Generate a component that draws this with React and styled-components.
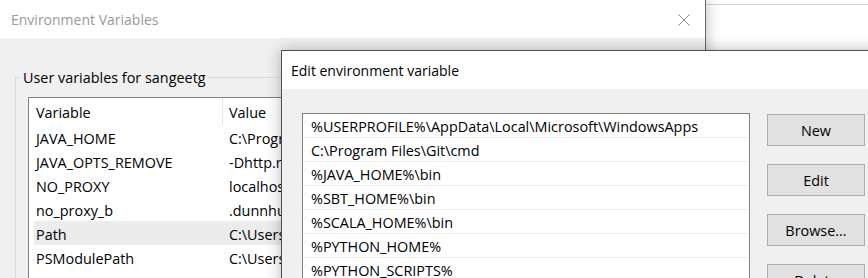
import React from 'react';
import styled, { createGlobalStyle } from 'styled-components';

const GlobalStyle = createGlobalStyle`
  html, body {
    margin: 0;
    padding: 0;
    background: #ffffff;
  }
  body {
    font-family: "Open Sans", "Noto Sans", sans-serif;
    font-size: 14.4px;
    color: #000000;
  }
`;

const Desktop = styled.div`
  position: relative;
  width: 868px;
  height: 278px;
  overflow: hidden;
  background: #ffffff;
`;

const Window = styled.div`
  position: absolute;
  left: ${p => p.$left}px;
  top: ${p => p.$top}px;
  width: ${p => p.$width}px;
  height: ${p => p.$height}px;
  display: flex;
  flex-direction: column;
  background: #f0f0f0;
  border: 1px solid ${p => p.$border || '#5c5c5c'};
  box-shadow: 0 0 14px rgba(0, 0, 0, 0.28);
  z-index: ${p => p.$z};
`;

const OtherWindow = styled.div`
  position: absolute;
  left: 700px;
  top: 4px;
  width: 200px;
  height: 300px;
  background: #ffffff;
  border-top: 1px solid #d4d4da;
  z-index: 0;
`;

const TitleBar = styled.div`
  flex: 0 0 ${p => p.$height}px;
  display: flex;
  align-items: center;
  justify-content: space-between;
  background: #ffffff;
  padding: 1px ${p => p.$padRight}px 0 ${p => p.$padLeft}px;
  color: ${p => (p.$inactive ? '#999999' : '#000000')};
  font-size: 14px;
`;

const CloseGlyph = ({ color }) => (
  <svg width="12" height="12" viewBox="0 0 12 12">
    <path d="M0.5 0.5 L11.5 11.5 M11.5 0.5 L0.5 11.5" stroke={color} strokeWidth="1" />
  </svg>
);

const Body = styled.div`
  flex: 1;
  position: relative;
  display: flex;
`;

const GroupBox = styled.fieldset`
  margin: 30px 0 0 15px;
  padding: 10px 0 0 12px;
  border: 1px solid #dcdcdc;
  border-right: none;
  border-bottom: none;
  flex: 1;
  min-width: 0;
  height: 300px;
  & > legend {
    padding: 0 2px 0 3px;
    margin-left: -8px;
    font-size: 14.4px;
  }
`;

const ListView = styled.div`
  background: #ffffff;
  border: 1px solid #828282;
  border-right: none;
  height: 300px;
`;

const HeaderRow = styled.div`
  display: grid;
  grid-template-columns: 186px 1fr;
  height: 27px;
  align-items: center;
  padding-left: 7px;
`;

const HeaderCell = styled.div`
  height: 100%;
  display: flex;
  align-items: center;
  padding-top: 1px;
  box-sizing: border-box;
  ${p => p.$divided && 'border-left: 1px solid #e5e5e5; padding-left: 6px;'}
`;

const VarRow = styled.div`
  display: grid;
  grid-template-columns: 186px 1fr;
  height: 24px;
  align-items: center;
  margin-left: 5px;
  padding: 2px 0 0 2px;
  box-sizing: border-box;
  background: ${p => (p.$selected ? '#ececec' : 'transparent')};
  white-space: nowrap;
`;

const ValueCell = styled.div`
  padding-left: 7px;
  overflow: hidden;
`;

const EditBody = styled.div`
  flex: 1;
  display: flex;
  align-items: flex-start;
  padding: 24px 0 0 20px;
  gap: 17px;
`;

const PathList = styled.div`
  width: 446px;
  height: 300px;
  background: #ffffff;
  border: 1px solid #828282;
`;

const PathRow = styled.div`
  height: 24px;
  box-sizing: border-box;
  border-bottom: 1px solid #efefef;
  display: flex;
  align-items: center;
  padding: 2px 0 0 8px;
  white-space: nowrap;
`;

const ButtonColumn = styled.div`
  display: flex;
  flex-direction: column;
  gap: 18px;
  padding-top: 1px;
`;

const Button = styled.button`
  width: 98px;
  height: 32px;
  background: #e1e1e1;
  border: 1px solid #adadad;
  font-family: inherit;
  font-size: 14.4px;
  color: #000000;
  padding: 1px 0 0;
`;

const variables = [
  ['JAVA_HOME', 'C:\\Program Files\\Java\\jdk1.8.0'],
  ['JAVA_OPTS_REMOVE', '-Dhttp.nonProxyHosts'],
  ['NO_PROXY', 'localhost'],
  ['no_proxy_b', '.dunnhumby.com'],
  ['Path', 'C:\\Users\\sangeetg\\AppData'],
  ['PSModulePath', 'C:\\Users\\sangeetg\\Documents'],
];

const paths = [
  '%USERPROFILE%\\AppData\\Local\\Microsoft\\WindowsApps',
  'C:\\Program Files\\Git\\cmd',
  '%JAVA_HOME%\\bin',
  '%SBT_HOME%\\bin',
  '%SCALA_HOME%\\bin',
  '%PYTHON_HOME%',
  '%PYTHON_SCRIPTS%',
];

export default function App() {
  return (
    <Desktop>
      <GlobalStyle />
      <OtherWindow />

      <Window $left={-1} $top={-1} $width={705} $height={320} $z={1} $border="#6a6a6a">
        <TitleBar $height={37} $padLeft={11} $padRight={15} $inactive>
          <span>Environment Variables</span>
          <CloseGlyph color="#8a8a8a" />
        </TitleBar>
        <Body>
          <GroupBox>
            <legend>User variables for sangeetg</legend>
            <ListView>
              <HeaderRow>
                <HeaderCell>Variable</HeaderCell>
                <HeaderCell $divided>Value</HeaderCell>
              </HeaderRow>
              {variables.map(([name, value]) => (
                <VarRow key={name} $selected={name === 'Path'}>
                  <div>{name}</div>
                  <ValueCell>{value}</ValueCell>
                </VarRow>
              ))}
            </ListView>
          </GroupBox>
        </Body>
      </Window>

      <Window $left={281} $top={50} $width={620} $height={300} $z={2} $border="#4f4f4f">
        <TitleBar $height={37} $padLeft={9} $padRight={2}>
          <span>Edit environment variable</span>
          <CloseGlyph color="#000000" />
        </TitleBar>
        <EditBody>
          <PathList>
            {paths.map(p => (
              <PathRow key={p}>{p}</PathRow>
            ))}
          </PathList>
          <ButtonColumn>
            <Button>New</Button>
            <Button>Edit</Button>
            <Button>Browse...</Button>
            <Button>Delete</Button>
          </ButtonColumn>
        </EditBody>
      </Window>
    </Desktop>
  );
}
